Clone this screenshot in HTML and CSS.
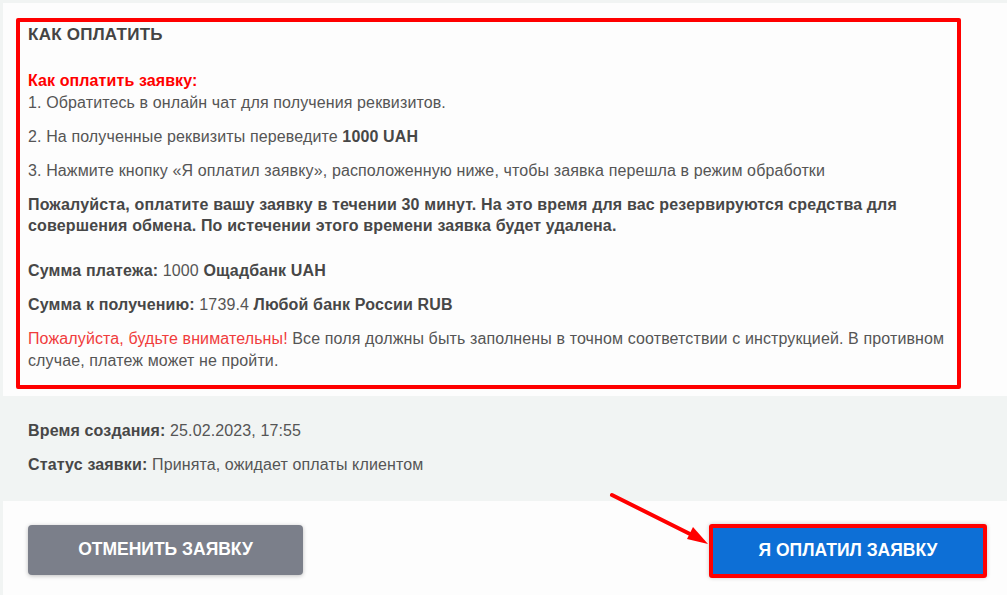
FILE: index.html
```html
<!DOCTYPE html>
<html lang="ru">
<head>
  <meta charset="UTF-8">
  <meta name="viewport" content="width=device-width, initial-scale=1.0">
  <title>Как оплатить заявку</title>
  <link rel="stylesheet" href="styles.css">
</head>
<body>

  <div class="order">
    <!-- Instructions -->
    <div class="order-info">
      <div class="howto">
        <h3 class="howto-title">КАК ОПЛАТИТЬ</h3>
        <p><span class="howto-sub">Как оплатить заявку:</span><br>1. Обратитесь в онлайн чат для получения реквизитов.</p>
        <p>2. На полученные реквизиты переведите <b>1000 UAH</b></p>
        <p>3. Нажмите кнопку «Я оплатил заявку», расположенную ниже, чтобы заявка перешла в режим обработки</p>
        <p class="howto-note"><b>Пожалуйста, оплатите вашу заявку в течении 30 минут. На это время для вас резервируются средства для совершения обмена. По истечении этого времени заявка будет удалена.</b></p>
        <p><b>Сумма платежа:</b> 1000 <b>Ощадбанк UAH</b></p>
        <p><b>Сумма к получению:</b> 1739.4 <b>Любой банк России RUB</b></p>
        <p><span class="warn">Пожалуйста, будьте внимательны!</span> Все поля должны быть заполнены в точном соответствии с инструкцией. В противном случае, платеж может не пройти.</p>
      </div>
    </div>

    <!-- Order meta -->
    <div class="order-meta">
      <p><b>Время создания:</b> 25.02.2023, 17:55</p>
      <p><b>Статус заявки:</b> Принята, ожидает оплаты клиентом</p>
    </div>

    <!-- Buttons -->
    <div class="order-actions">
      <button class="btn btn-cancel">ОТМЕНИТЬ ЗАЯВКУ</button>
      <button class="btn btn-paid">Я ОПЛАТИЛ ЗАЯВКУ</button>
      <svg class="pointer" width="110" height="60" viewBox="0 0 110 60">
        <line x1="4" y1="3" x2="86" y2="44" stroke="#ff0000" stroke-width="4" stroke-linecap="round"/>
        <polygon points="100,52 85,35 79,47" fill="#ff0000"/>
      </svg>
    </div>
  </div>

</body>
</html>
```

FILE: styles.css
```css
body {
  margin: 0;
  padding: 0;
  background-color: #f1f4f3;
  font-family: "Liberation Sans", Arial, sans-serif;
  font-size: 16px;
  line-height: 21.5px;
  letter-spacing: 0.12px;
  color: #555;
}

b {
  color: #474747;
  letter-spacing: 0.15px;
}

p {
  margin: 0 0 12.5px;
}

/* Instructions card */
.order-info {
  background-color: #fdfdfd;
  margin: 3px 0 0 3px;
  padding: 15px 46px 7px 13px;
}

.howto {
  border: 4px solid #ff0000;
  border-radius: 2px;
  padding: 2px 8px 1px 8px;
}

.howto-title {
  margin: 0 0 24px;
  font-size: 17px;
  line-height: 22px;
  letter-spacing: 0.25px;
  color: #444;
}

.howto-sub {
  color: #ff0000;
  font-weight: bold;
  letter-spacing: 0.1px;
}

.howto-note {
  margin-bottom: 23.5px;
}

.warn {
  color: #f03c3c;
}

/* Meta */
.order-meta {
  padding: 24px 28px 13px;
}

/* Actions */
.order-actions {
  position: relative;
  background-color: #fdfdfd;
  margin-left: 3px;
  height: 120px;
  padding: 23px 20px 0 25px;
  display: flex;
  justify-content: space-between;
  align-items: flex-start;
}

.btn {
  font-family: "Liberation Sans", Arial, sans-serif;
  font-size: 17.5px;
  font-weight: bold;
  color: #fff;
  border-radius: 4px;
  cursor: pointer;
}

.btn-cancel {
  margin-top: 1px;
  width: 275px;
  height: 50px;
  border: none;
  background-color: #7b7f8a;
  box-shadow: 0 1px 4px rgba(0, 0, 0, 0.25);
}

.btn-paid {
  width: 278px;
  height: 54px;
  border: 4px solid #ff0000;
  border-radius: 3px;
  background-color: #0d6fd6;
  box-shadow: 0 0 4px rgba(0, 0, 0, 0.2);
}

.pointer {
  position: absolute;
  left: 605px;
  top: -9px;
}
```
